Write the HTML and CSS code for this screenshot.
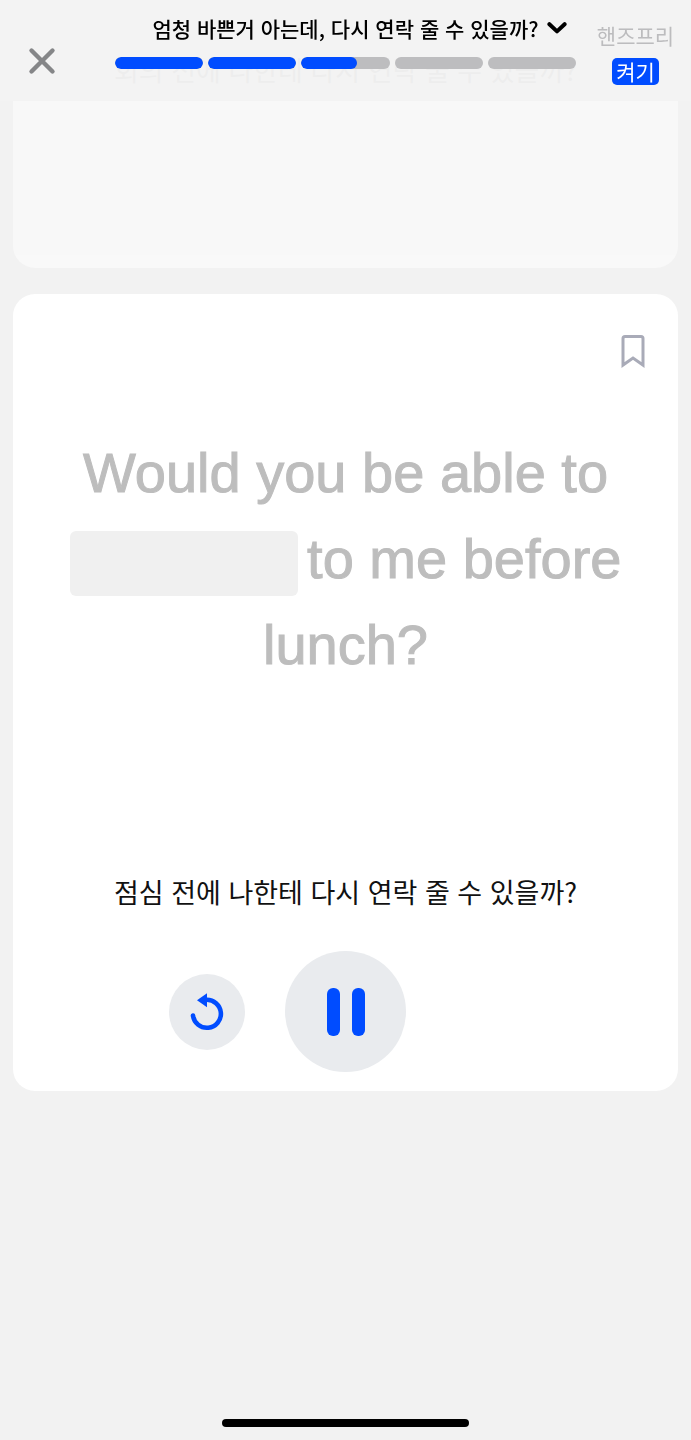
FILE: index.html
```html
<!DOCTYPE html>
<html lang="ko">
<head>
    <meta charset="UTF-8">
    <meta name="viewport" content="width=device-width, initial-scale=1.0">
    <title>다시 연락 줄 수 있을까?</title>
    <link rel="stylesheet" href="styles.css">
</head>
<body>
    <header class="topbar">
        <button class="close" type="button" aria-label="닫기">
            <svg width="28" height="28" viewBox="0 0 28 28" fill="none" stroke="#858688" stroke-width="4.4" stroke-linecap="round">
                <path d="M3.5 3.5 L24.5 24.5 M24.5 3.5 L3.5 24.5"/>
            </svg>
        </button>
        <div class="lesson">
            <button class="lesson-title" type="button">
                엄청 바쁜거 아는데, 다시 연락 줄 수 있을까?
                <svg class="chevron" width="20" height="14" viewBox="0 0 20 14" fill="none" stroke="#000" stroke-width="4" stroke-linecap="round" stroke-linejoin="round">
                    <path d="M2.4 3.2 L10 10.4 L17.6 3.2"/>
                </svg>
            </button>
            <div class="progress">
                <div class="step"><div class="fill" style="width: 100%"></div></div>
                <div class="step"><div class="fill" style="width: 100%"></div></div>
                <div class="step"><div class="fill" style="width: 63%"></div></div>
                <div class="step"></div>
                <div class="step"></div>
            </div>
        </div>
        <div class="handsfree">
            <span id="handsfree-label">핸즈프리</span>
            <button class="toggle" type="button" aria-describedby="handsfree-label">켜기</button>
        </div>
    </header>

    <main class="cards">
        <section class="card previous">
            <p class="meaning">회의 전에 나한테 다시 연락 줄 수 있을까?</p>
        </section>

        <section class="card current">
            <button class="bookmark" type="button" aria-label="저장">
                <svg width="24" height="34" viewBox="0 0 24 34" fill="none" stroke="#a9abb8" stroke-width="3">
                    <path d="M2 31 V4.5 Q2 2.5 4 2.5 H20 Q22 2.5 22 4.5 V31 L12 24 Z"/>
                </svg>
            </button>
            <p class="sentence" lang="en">Would you be able to <span class="blank"></span> to me before lunch?</p>
            <p class="meaning">점심 전에 나한테 다시 연락 줄 수 있을까?</p>
            <div class="controls">
                <button class="round replay" type="button" aria-label="다시 듣기">
                    <svg width="34" height="40" viewBox="0 0 34 40">
                        <path d="M3 23.5 A14 14 0 1 0 16 7.8" fill="none" stroke="#004cff" stroke-width="4.6" stroke-linecap="round"/>
                        <path d="M7 8.2 L17 1.2 V15.2 Z" fill="#004cff"/>
                    </svg>
                </button>
                <button class="round pause" type="button" aria-label="일시정지">
                    <svg width="40" height="50" viewBox="0 0 40 50" fill="#004cff">
                        <rect x="1" y="1" width="13" height="48" rx="6"/>
                        <rect x="26" y="1" width="13" height="48" rx="6"/>
                    </svg>
                </button>
            </div>
        </section>
    </main>

    <div class="home-indicator"></div>
</body>
</html>
```
FILE: styles.css
```css
* {
    box-sizing: border-box;
}
body {
    margin: 0;
    min-height: 100vh;
    display: flex;
    flex-direction: column;
    background-color: #f2f2f2;
    color: #111;
    font-family: "Noto Sans CJK KR", sans-serif;
}
p {
    margin: 0;
}
button {
    border: none;
    padding: 0;
    background: none;
    color: inherit;
    font: inherit;
    cursor: pointer;
}
svg {
    display: block;
}

/* header stays over the scrolled cards */
.topbar {
    position: fixed;
    top: 0;
    left: 0;
    right: 0;
    z-index: 1;
    height: 101px;
    display: grid;
    grid-template-columns: 115px minmax(0, 1fr) 115px;
    background-color: rgba(242, 242, 242, 0.95);
}
.close {
    justify-self: start;
    align-self: start;
    margin: 47px 0 0 28px;
}
.lesson {
    display: flex;
    flex-direction: column;
    align-items: center;
    padding-top: 12px;
}
.lesson-title {
    position: relative;
    font-size: 21px;
    font-weight: 500;
    line-height: 32px;
    color: #000;
    white-space: nowrap;
}
.chevron {
    position: absolute;
    left: 100%;
    top: 9px;
    margin-left: 8px;
}
.progress {
    align-self: stretch;
    display: flex;
    gap: 5px;
    margin-top: 13px;
}
.step {
    flex: 1;
    height: 12px;
    border-radius: 6px;
    background-color: #bdbdbf;
    overflow: hidden;
}
.fill {
    height: 100%;
    border-radius: 6px;
    background-color: #004cff;
}
.handsfree {
    display: flex;
    flex-direction: column;
    align-items: center;
    padding: 21px 0 0 4px;
    font-size: 21px;
    line-height: 28px;
    color: #bcbcbe;
}
.toggle {
    margin-top: 9px;
    padding: 0 4px;
    border-radius: 5px;
    background-color: #004cff;
    color: #fff;
    line-height: 27px;
}

.cards {
    display: flex;
    flex-direction: column;
    gap: 26px;
    padding: 0 13px;
}
.card {
    border-radius: 22px;
    background-color: #fff;
}
.previous {
    padding: 50px 40px 178px;
    border-radius: 0 0 22px 22px;
    opacity: 0.5;
}
.current {
    display: flex;
    flex-direction: column;
    padding: 40px 40px 19px;
}
.bookmark {
    align-self: flex-end;
    margin-right: -7px;
}
.sentence {
    margin-top: 62px;
    font-family: "Liberation Sans", Arial, sans-serif;
    font-size: 56px;
    line-height: 86px;
    text-align: center;
    color: #bdbdbd;
    -webkit-text-stroke: 1px #bdbdbd;
}
.blank {
    display: inline-block;
    width: 228px;
    height: 65px;
    margin-right: -6px;
    border-radius: 6px;
    background-color: #f0f0f0;
    vertical-align: middle;
}
.meaning {
    font-size: 27px;
    line-height: 40px;
    text-align: center;
}
.current .meaning {
    margin-top: 184px;
}
.controls {
    display: grid;
    grid-template-columns: 1fr auto 1fr;
    align-items: center;
    gap: 40px;
    margin-top: 39px;
}
.round {
    display: flex;
    align-items: center;
    justify-content: center;
    border-radius: 50%;
    background-color: #e9ebee;
}
.replay {
    justify-self: end;
    width: 76px;
    height: 76px;
}
.pause {
    width: 121px;
    height: 121px;
}

.home-indicator {
    width: 247px;
    height: 8px;
    margin: auto auto 13px;
    border-radius: 4px;
    background-color: #000;
}
```
